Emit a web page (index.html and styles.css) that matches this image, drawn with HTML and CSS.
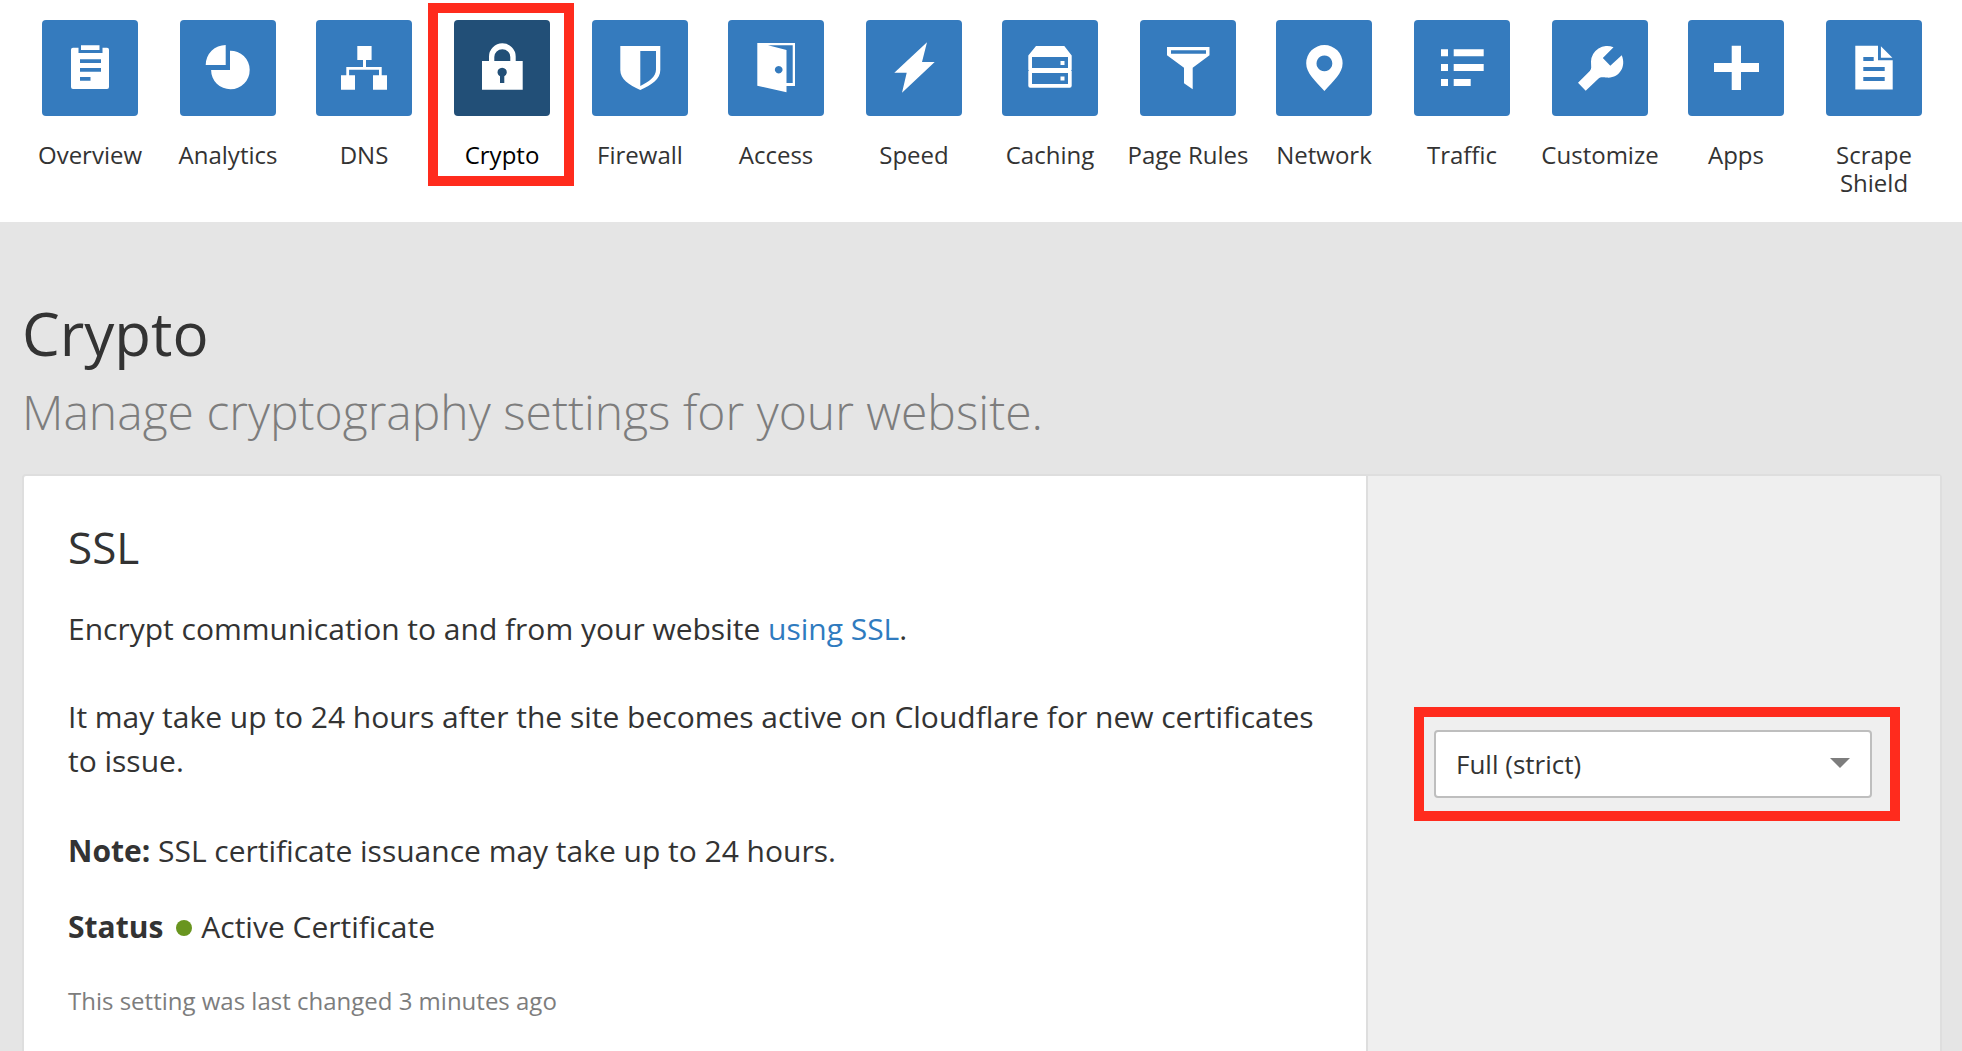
FILE: index.html
```html
<!DOCTYPE html>
<html lang="en">
<head>
<meta charset="utf-8">
<title>Crypto</title>
<link rel="stylesheet" href="styles.css">
</head>
<body>
<nav class="nav">
  <a class="nav-item"><svg class="tile" viewBox="0 0 96 96"><path d="M31 27.7h5.500v5.300h24v-5.300h4.500q2 0 2 2v37.300q0 2-2 2h-34q-2 0-2-2v-37.300q0-2 2-2zM38 39.300v3.700h21v-3.700zM38 48v3.700h21v-3.700zM38 57v3.700h10.500v-3.700zM39 25.300h18.500v4.700h-18.500z" fill-rule="evenodd"/></svg><span class="label">Overview</span></a>
  <a class="nav-item"><svg class="tile" viewBox="0 0 96 96"><path d="M45.700 25v20h-20a20 20 0 0 1 20-20zM50 30.700a19.300 19.300 0 1 1-18.900 19.300h18.900z"/></svg><span class="label">Analytics</span></a>
  <a class="nav-item"><svg class="tile" viewBox="0 0 96 96"><path d="M41.300 26h14.300v14h-5.600v7h15.700v8.300h5.300v14.400h-14v-14.400h6v-5.600h-29.900v5.600h5.900v14.400h-14v-14.400h5.300v-8.300h16.700v-7h-5.700z"/></svg><span class="label">DNS</span></a>
  <a class="nav-item is-active"><svg class="tile" viewBox="0 0 96 96"><path fill-rule="evenodd" d="M28 41h7v-4.500a13.350 13.200 0 0 1 26.700 0v4.500h7v28.700h-40.700zM40.300 41h16v-4a8 7.700 0 0 0-16 0zM46 56.300v6.700h4.300v-6.700a4.600 4.600 0 1 0-4.300 0z"/></svg><span class="label">Crypto</span></a>
  <a class="nav-item"><svg class="tile" viewBox="0 0 96 96"><path fill-rule="evenodd" d="M28.300 26h40v24c0 9-8.500 15-20 20c-11.500-5-20-11-20-20zM48.300 31v35c9-4.300 15.700-9.500 15.700-16.500v-18.500z"/></svg><span class="label">Firewall</span></a>
  <a class="nav-item"><svg class="tile" viewBox="0 0 96 96"><path fill-rule="evenodd" d="M29.300 23h37.700v43h-8.500v6.300l-29.200-6.500zM40 25.300l18.500 4.700v33h6.200v-37.700zM50.700 45.900a3.800 3.800 0 1 0 .01 0z"/></svg><span class="label">Access</span></a>
  <a class="nav-item"><svg class="tile" viewBox="0 0 96 96"><path d="M61 22.300l-5 19.700h12.700l-32.700 30.700 4.700-20h-12.400z"/></svg><span class="label">Speed</span></a>
  <a class="nav-item"><svg class="tile" viewBox="0 0 96 96"><path fill-rule="evenodd" d="M34 26h28.300l7.400 9.500v14.200l-.7.700.7.700v14.600q0 2-2 2h-39.400q-2 0-2-2v-14.600l.7-.7-.7-.7v-14.200zM30 37v11h36v-11zM30 53v11h36v-11zM58.500 41h4v4h-4zM58.500 56.500h4v4h-4z"/></svg><span class="label">Caching</span></a>
  <a class="nav-item"><svg class="tile" viewBox="0 0 96 96"><path fill-rule="evenodd" d="M27 27h42.500v8.300l-16.800 12.400v21.600l-8.700-6v-15.600l-17-12.400zM31 30.300v3.500h35v-3.500z"/></svg><span class="label">Page Rules</span></a>
  <a class="nav-item"><svg class="tile" viewBox="0 0 96 96"><path fill-rule="evenodd" d="M48.400 25a18.200 18.200 0 0 1 18.200 18.200c0 10-9 17.500-18.200 27.800c-9.200-10.300-18.200-17.800-18.200-27.800a18.200 18.200 0 0 1 18.200-18.200zM48.400 35.500a7.900 7.900 0 1 0 .01 0z"/></svg><span class="label">Network</span></a>
  <a class="nav-item"><svg class="tile" viewBox="0 0 96 96"><path d="M27 29.300h7v7h-7zM39.700 29.300h30v7h-30zM27 44h7v7h-7zM39.700 44h30v7h-30zM27 59h7v7h-7zM39.700 59h17v7h-17z"/></svg><span class="label">Traffic</span></a>
  <a class="nav-item"><svg class="tile" viewBox="0 0 96 96"><path d="M26 62.700l11.800-11.800q1.400-1.400 1.400-3.400l-.2-6a16.100 16.100 0 0 1 22.500-14.200l-10.700 10.700 7.500 7.700 11.400-10.400c5 11.500-2.700 23.200-14.700 22.300-5.500-.5-6.500-.5-8.700 1.100l-12.600 12z"/></svg><span class="label">Customize</span></a>
  <a class="nav-item"><svg class="tile" viewBox="0 0 96 96"><path d="M43.700 25.700h9.300v17.300h18v9h-18v18h-9.300v-18h-17.700v-9h17.700z"/></svg><span class="label">Apps</span></a>
  <a class="nav-item"><svg class="tile" viewBox="0 0 96 96"><path fill-rule="evenodd" d="M29.300 25.700h22.700v14.600h14.700v29.200h-37.400zM37.300 37v4h10.400v-4zM37.300 47v4h21.400v-4zM37.300 57v4h21.400v-4zM54.900 26.300l11.500 11.500h-11.500z"/></svg><span class="label">Scrape Shield</span></a>
</nav>
<main class="page">
  <h1 class="title">Crypto</h1>
  <p class="subtitle">Manage cryptography settings for your website.</p>
  <section class="card">
    <div class="card-main">
      <h2 class="card-title">SSL</h2>
      <p class="text intro">Encrypt communication to and from your website <a class="link">using SSL</a>.</p>
      <p class="text delay">It may take up to 24 hours after the site becomes active on Cloudflare for new certificates to issue.</p>
      <p class="text note"><strong>Note:</strong> SSL certificate issuance may take up to 24 hours.</p>
      <p class="text status"><strong>Status</strong><i class="dot"></i>Active Certificate</p>
      <p class="changed">This setting was last changed 3 minutes ago</p>
    </div>
    <div class="card-control">
      <div class="select"><span class="select-value">Full (strict)</span><i class="caret"></i></div>
    </div>
  </section>
</main>
<div class="highlight highlight-nav"></div>
<div class="highlight highlight-select"></div>
</body>
</html>
```
FILE: styles.css
```css
* { box-sizing: border-box; }
html, body { height: 100%; }
body {
  margin: 0;
  position: relative;
  overflow: hidden;
  display: flex;
  flex-direction: column;
  background: #e5e5e5;
  color: #333;
  font-family: "Open Sans", "Noto Sans", sans-serif;
}
h1, h2, p { margin: 0; font-weight: 400; }

.nav {
  flex: none;
  height: 222px;
  padding: 20px 0 0 21px;
  display: grid;
  grid-template-columns: 138px 136px 138px 138px 136px 138px 136px 138px 136px 138px 138px 136px 138px 138px;
  background: #fff;
}
.nav-item {
  width: 138px;
  display: flex;
  flex-direction: column;
  align-items: center;
  gap: 25px;
}
.tile {
  width: 96px;
  height: 96px;
  border-radius: 4px;
  background: #357bbe;
  fill: #fff;
}
.label {
  padding: 0 7px;
  font-size: 24px;
  line-height: 28px;
  text-align: center;
}
.is-active .tile { background: #224f77; }
.is-active .label { color: #000; }

.page {
  flex: 1;
  min-height: 0;
  padding: 72px 20px 0 22px;
  display: flex;
  flex-direction: column;
}
.title { font-size: 60px; line-height: 78px; margin-bottom: 7px; }
.subtitle {
  font-size: 48px;
  line-height: 66px;
  font-weight: 300;
  color: #7d7d7d;
  margin-bottom: 29px;
  white-space: nowrap;
}
.card {
  flex: 1;
  min-height: 0;
  display: grid;
  grid-template-columns: 1342px 1fr;
  border: 2px solid #dedede;
  border-bottom: 0;
  border-radius: 4px 4px 0 0;
  background: #fff;
}
.card-main { padding: 41px 44px 0; }
.card-title { font-size: 44px; line-height: 60px; margin-bottom: 30px; }
.text { font-size: 30px; line-height: 44px; word-spacing: -0.05px; }
.intro { margin-bottom: 44px; }
.delay { margin-bottom: 46px; }
.note { margin-bottom: 32px; }
.status { display: flex; align-items: center; margin-bottom: 34px; }
.dot {
  width: 16px;
  height: 16px;
  margin: 2px 9px 0 13px;
  border-radius: 50%;
  background: #69951f;
}
.link { color: #2f7bbf; }
.changed { font-size: 24px; line-height: 36px; color: #7d7d7d; }

.card-control {
  padding: 254px 68px 0 66px;
  border-left: 2px solid #dedede;
  background: #efefef;
}
.select {
  height: 68px;
  padding: 0 20px;
  display: flex;
  align-items: center;
  justify-content: space-between;
  border: 2px solid #bebebe;
  border-radius: 4px;
  background: #fff;
  font-size: 26px;
}
.caret {
  border: 10px solid transparent;
  border-top-color: #7d7d7d;
  border-bottom: 0;
  margin-bottom: 3px;
}

.highlight { position: absolute; border: 10px solid #ff2b1d; }
.highlight-nav { left: 428px; top: 3px; width: 146px; height: 183px; }
.highlight-select { left: 1414px; top: 707px; width: 486px; height: 114px; }
```
